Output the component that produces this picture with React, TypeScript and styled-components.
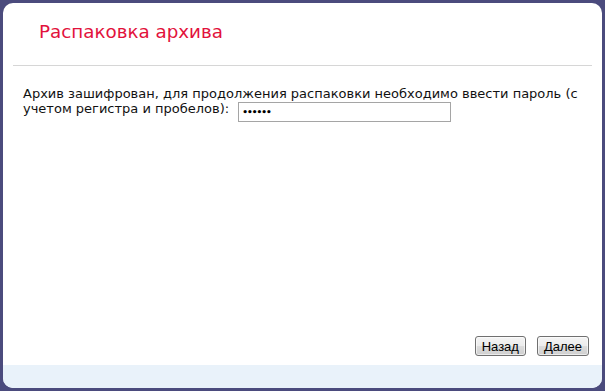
import React from "react";
import styled, { createGlobalStyle } from "styled-components";

const Global = createGlobalStyle`
  html, body { margin: 0; padding: 0; background: #4b4b7d; }
  body { width: 605px; height: 391px; overflow: hidden; }
`;

const Frame = styled.div`
  box-sizing: border-box;
  width: 605px;
  height: 391px;
  padding: 3px;
  background: #4b4b7d;
`;

const Panel = styled.div`
  height: 100%;
  background: #ffffff;
  border-radius: 10px;
  overflow: hidden;
  display: flex;
  flex-direction: column;
`;

const Header = styled.div`
  height: 63px;
  box-sizing: border-box;
  padding: 18px 0 0 26px;
  border-bottom: 1px solid #d6d6d6;
  margin: 0 10px;
`;

const Title = styled.h1`
  margin: 0;
  font-family: "DejaVu Sans", Verdana, sans-serif;
  font-weight: normal;
  font-size: 18.3px;
  color: #e2123c;
`;

const Body = styled.div`
  flex: 1;
  padding: 20px 20px 0 20px;
  font-family: "DejaVu Sans", Verdana, sans-serif;
  font-size: 13px;
  line-height: 15px;
  color: #111;
`;

const PasswordInput = styled.input`
  box-sizing: border-box;
  width: 213px;
  height: 20px;
  margin-left: 9px;
  border: 1px solid #a5a5a5;
  padding: 0 3px;
  font-family: "DejaVu Sans", sans-serif;
  font-size: 9px;
  font-weight: bold;
  letter-spacing: -1px;
  vertical-align: -2px;
  outline: none;
`;

const Actions = styled.div`
  display: flex;
  justify-content: flex-end;
  gap: 11px;
  padding: 0 13px 9px 0;
`;

const Button = styled.button`
  box-sizing: border-box;
  height: 20px;
  padding: 0 6px;
  border: 1px solid #707070;
  border-radius: 3px;
  background: linear-gradient(#f4f4f4 0%, #ececec 50%, #dcdcdc 51%, #cfcfcf 100%);
  font-family: "Liberation Sans", Arial, sans-serif;
  font-size: 13px;
  color: #000;
  box-shadow: inset 0 0 0 1px rgba(255,255,255,0.6);
`;

const Footer = styled.div`
  height: 23px;
  background: #e9f2fa;
`;

export default function App() {
  return (
    <>
      <Global />
      <Frame>
        <Panel>
          <Header>
            <Title>Распаковка архива</Title>
          </Header>
          <Body>
            Архив зашифрован, для продолжения распаковки необходимо ввести пароль (с
            учетом регистра и пробелов):
            <PasswordInput type="password" defaultValue="123456" />
          </Body>
          <Actions>
            <Button>Назад</Button>
            <Button>Далее</Button>
          </Actions>
          <Footer />
        </Panel>
      </Frame>
    </>
  );
}
